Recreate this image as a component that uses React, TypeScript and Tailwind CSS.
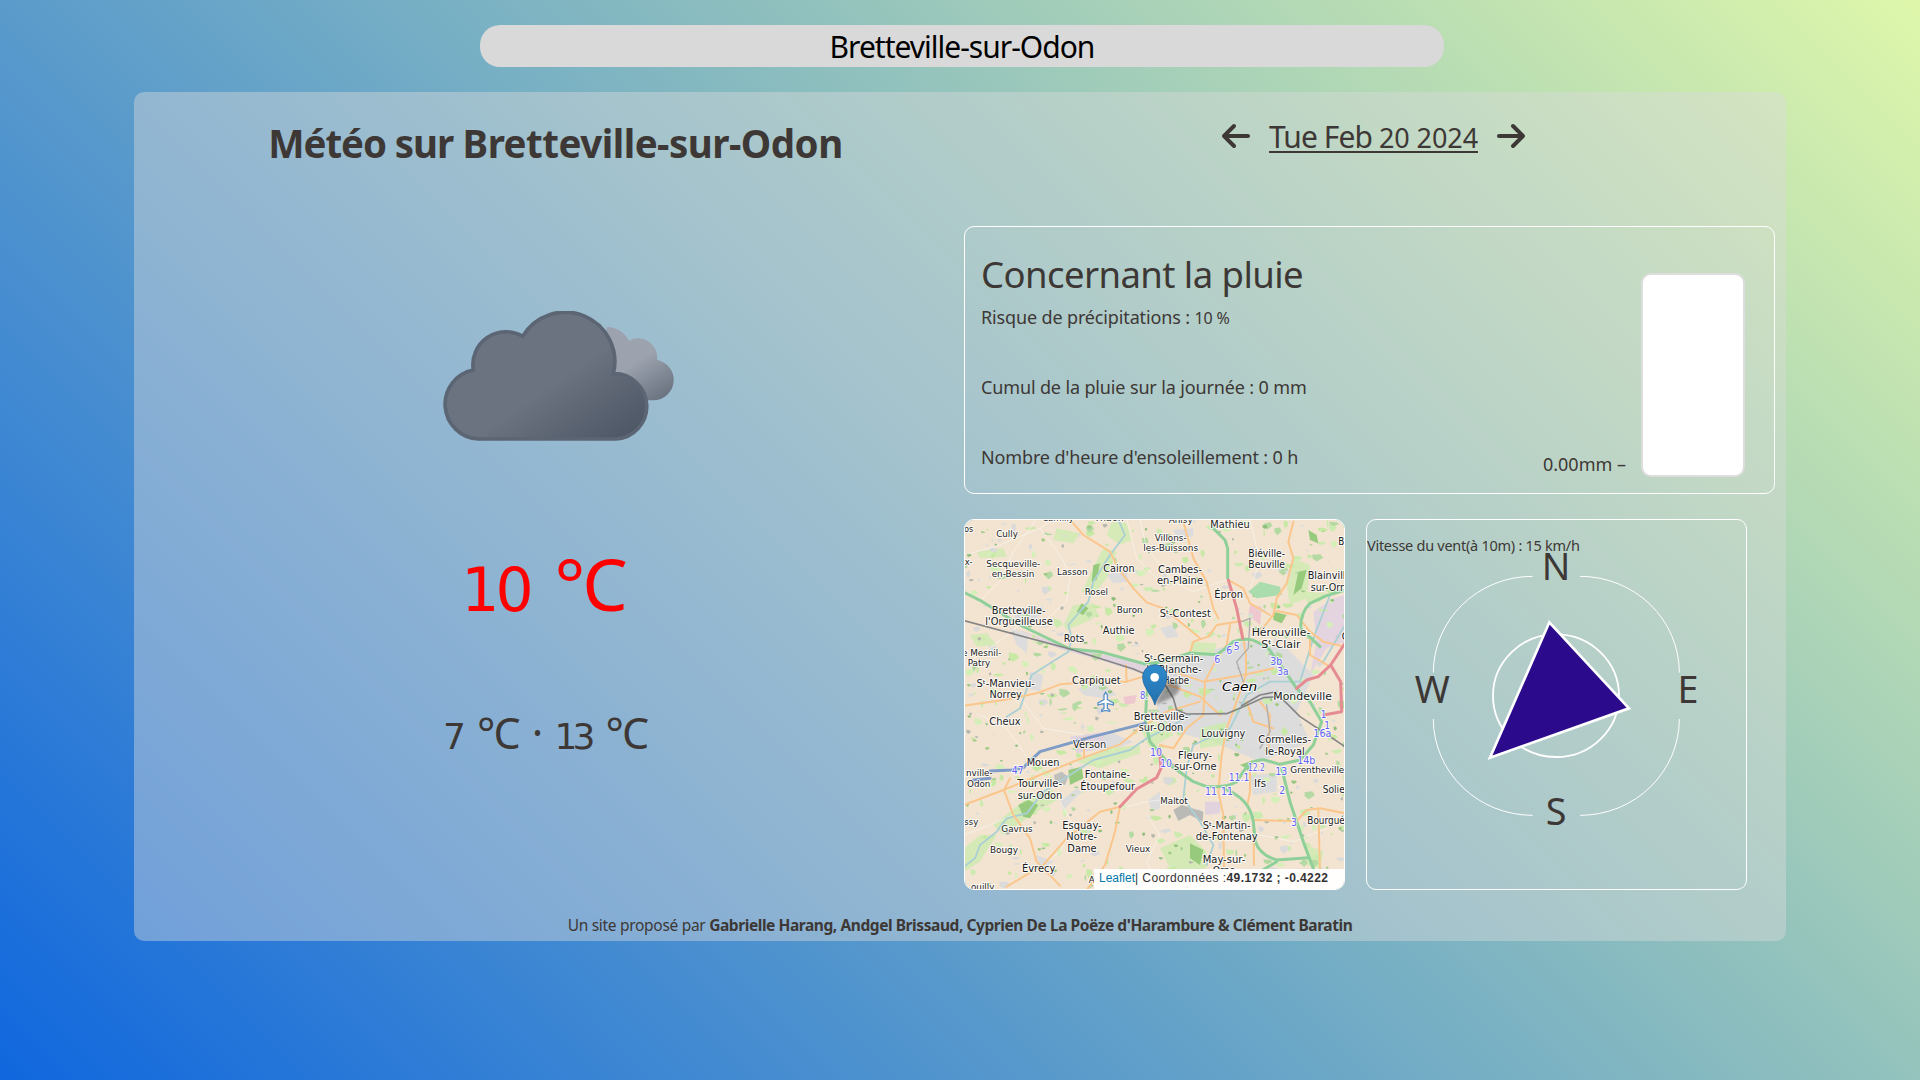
import React from "react";
import { FaArrowLeft, FaArrowRight } from "react-icons/fa6";

type Label = [text: string, x: number, y: number, width: number, size: number];

const towns: Label[] = [
  ["os", 26, 50, 28, 25],
  ["Cully", 141, 67, 65, 26],
  ["Camilly", 294, 18, 95, 26],
  ["Thaon", 447, 19, 88, 26],
  ["Secqueville-", 160, 156, 162, 26],
  ["en-Bessin", 159, 187, 128, 26],
  ["x-", 26, 150, 24, 25],
  ["Lasson", 337, 180, 92, 26],
  ["Cairon", 477, 171, 94, 29],
  ["Rosel", 409, 241, 70, 26],
  ["Buron", 509, 295, 78, 26],
  ["Authie", 476, 358, 95, 29],
  ["Bretteville-", 176, 296, 162, 29],
  ["l'Orgueilleuse", 177, 330, 203, 29],
  ["Rots", 342, 382, 62, 29],
  ["e Mesnil-", 65, 424, 118, 27],
  ["Patry", 57, 454, 68, 27],
  ["Sᵗ-Manvieu-", 137, 515, 175, 29],
  ["Norrey", 137, 549, 97, 29],
  ["Carpiquet", 409, 507, 146, 29],
  ["Anisy", 662, 24, 72, 26],
  ["Mathieu", 810, 38, 118, 29],
  ["Villons-", 632, 77, 96, 26],
  ["les-Buissons", 632, 107, 165, 26],
  ["Cambes-", 660, 173, 132, 29],
  ["en-Plaine", 660, 208, 138, 29],
  ["Épron", 806, 249, 86, 29],
  ["Sᵗ-Contest", 676, 307, 153, 29],
  ["Biéville-", 920, 126, 110, 29],
  ["Beuville", 920, 160, 110, 29],
  ["Blainville-", 1114, 193, 142, 29],
  ["sur-Orne", 1114, 228, 124, 29],
  ["B", 1144, 90, 18, 29],
  ["C", 1155, 374, 20, 29],
  ["Hérouville-", 963, 362, 176, 31],
  ["Sᵗ-Clair", 963, 398, 118, 31],
  ["Sᵗ-Germain-", 641, 441, 178, 29],
  ["la-Blanche-", 642, 475, 166, 29],
  ["Herbe", 648, 508, 78, 29],
  ["Mondeville", 1028, 555, 176, 30],
  ["Cheux", 135, 630, 94, 29],
  ["Verson", 389, 698, 100, 29],
  ["Mouen", 249, 754, 98, 29],
  ["nville-", 58, 784, 80, 27],
  ["Odon", 56, 816, 70, 27],
  ["Tourville-", 239, 817, 134, 29],
  ["sur-Odon", 240, 852, 134, 29],
  ["Fontaine-", 442, 790, 136, 29],
  ["Étoupefour", 443, 825, 165, 29],
  ["ssy", 34, 929, 42, 27],
  ["Gavrus", 171, 952, 94, 26],
  ["Bougy", 132, 1013, 84, 26],
  ["Esquay-", 366, 942, 118, 29],
  ["Notre-", 365, 976, 92, 29],
  ["Dame", 366, 1011, 88, 29],
  ["Vieux", 534, 1012, 74, 26],
  ["Évrecy", 236, 1072, 100, 29],
  ["A", 395, 1105, 18, 27],
  ["ouilly", 68, 1125, 70, 26],
  ["Bretteville-", 603, 616, 164, 29],
  ["sur-Odon", 603, 649, 134, 29],
  ["Louvigny", 790, 666, 132, 29],
  ["Cormelles-", 974, 685, 158, 29],
  ["le-Royal", 975, 721, 118, 29],
  ["Fleury-", 705, 731, 102, 29],
  ["sur-Orne", 706, 766, 128, 29],
  ["Maltot", 642, 867, 82, 26],
  ["Ifs", 900, 817, 36, 31],
  ["Grentheville", 1072, 773, 162, 26],
  ["Soliers", 1134, 835, 92, 29],
  ["Bourguébus", 1122, 926, 160, 29],
  ["Sᵗ-Martin-", 800, 942, 144, 29],
  ["de-Fontenay", 800, 975, 186, 29],
  ["May-sur-", 792, 1044, 128, 29],
  ["Orne", 792, 1078, 68, 29],
];

const exits: Label[] = [
  ["6", 772, 444, 18, 30],
  ["6", 808, 416, 18, 30],
  ["5", 830, 405, 18, 30],
  ["3b", 949, 450, 36, 30],
  ["3a", 969, 480, 34, 30],
  ["8.", 552, 551, 24, 30],
  ["47", 173, 778, 36, 30],
  ["10", 588, 723, 36, 30],
  ["10", 618, 757, 36, 30],
  ["1", 1091, 608, 17, 30],
  ["1", 1101, 642, 17, 30],
  ["16a", 1087, 667, 54, 30],
  ["14b", 1039, 746, 54, 30],
  ["13", 964, 779, 36, 30],
  ["2", 967, 837, 18, 30],
  ["12.2", 889, 768, 50, 30],
  ["11.1", 837, 798, 62, 30],
  ["11", 753, 840, 36, 30],
  ["11", 801, 840, 36, 30],
  ["3", 1002, 933, 18, 30],
];

const motorways = [
  "M12 232 L60 256 L180 330 L330 402 L420 410 L555 447 L610 440 L690 414 L770 419 Q800 400 820 380 Q850 368 880 376 L920 394 L955 440 L1010 520",
  "M760 40 L795 75 L803 100 L803 190",
  "M1155 225 L1100 242 L1050 265 Q1022 290 1022 340 L1080 395",
  "M1010 520 L1050 560 L1085 620 L1060 690 L1020 735 L960 748 L910 734 Q870 735 850 770 L830 800 Q800 818 740 815 L700 800 L630 750 L570 680 L556 620 L560 540 L590 440",
  "M790 820 Q870 850 880 920 L886 980 Q900 1020 950 1035 L1046 1028",
  "M965 760 L990 860 L1030 980 L1065 1075",
  "M950 1040 L900 1070",
];

const primaries = [
  "M335 20 L370 60 L450 110 L475 160 L520 220 L560 262 L610 280 L660 320 L720 370",
  "M12 572 L130 555 L230 535 L300 508 L400 500 L500 500 L550 485 L600 500 L720 545 L780 600",
  "M500 500 L498 450",
  "M670 20 L700 130 L740 200 L760 280 L775 310",
  "M1000 20 L985 80 L1000 130 L980 205 L950 250 L940 300 L900 350",
  "M805 195 L850 220 L870 265 L930 300",
  "M950 288 L1010 300 L1050 350 L1090 380 L1155 395",
  "M690 412 L700 380 L745 365 L770 330 L845 318",
  "M845 340 L858 420 L858 480 L830 560 L800 640 L785 720 L775 830 L790 900 L792 1060",
  "M810 330 L800 390 L770 430 L735 500 L730 600",
  "M640 470 L730 500 L850 480 L940 460",
  "M12 870 L130 825 L240 780 L370 728 L480 688 L540 640 L620 590 L720 560",
  "M150 790 L132 825 L160 900 L210 970 L230 1040 L300 1112",
  "M480 875 L420 890 L320 970 L250 1050 L190 1085 L140 1115",
  "M480 875 L465 950 L435 1050 L380 1125",
  "M372 668 L372 728",
  "M870 770 L870 830 L862 870 L880 915 L1010 918 L1040 885 L1080 880 L1155 895",
  "M1075 885 L1080 1070",
  "M880 915 L882 1050",
  "M1050 370 L1050 420 L1110 455",
  "M900 560 L930 600 L925 700",
  "M860 560 L880 620 L940 640",
  "M730 600 L680 640 L640 700 L600 690",
];

const trunks = [
  "M805 195 L830 280 L848 370",
  "M1155 385 L1112 450 L1075 485 L1040 495 L1010 520",
  "M1112 450 L1142 500 L1145 590 L1090 600",
  "M480 875 L530 822 L590 788 L603 760 L598 700",
];

const rails = [
  "M12 317 L330 402 L520 462 L610 500 L640 550 L650 585 L680 597 L800 596 L850 575 L910 548 L960 545 L1020 605 L1070 638 L1155 695",
  "M845 572 L900 540 L950 530",
];

const lanes = [
  "M12 120 L120 90 L240 40 L280 12",
  "M240 40 L300 120 L330 180 L320 260 L250 320",
  "M60 256 L120 200 L160 110 L230 12",
  "M12 450 L90 400 L180 330",
  "M540 12 L560 100 L640 200 L700 230 L810 190",
  "M500 12 L530 130 L620 220",
  "M870 12 L900 140 L870 220",
  "M60 600 L140 640 L210 740",
  "M190 560 L250 640 L370 660",
  "M300 860 L340 930 L300 1010 L250 1050",
  "M12 960 L90 930 L160 900",
  "M560 900 L600 960 L560 1040 L600 1110",
  "M900 960 L1000 980 L1100 940",
  "M480 880 L560 860 L640 850",
];

const rivers = [
  "M475 15 L495 60 L450 120 L400 200 L385 260 L325 330 L335 370 L325 410 L270 445 L215 480 L180 580 L140 605",
  "M12 1055 L45 1030 L60 990 L110 950 L140 910 L200 895 L250 830 L330 780 L400 735 L510 705 L560 670 L640 630 L690 600",
  "M1110 240 L1060 370 L1020 500 L930 500 L860 540 L810 640 L700 690 L680 760 L670 850 L720 920 L760 990 L740 1050",
  "M1155 330 L1090 440",
];

const meadows = [
  "M455 20 L500 25 L515 75 L480 90 L440 60Z",
  "M430 100 L470 110 L440 190 L400 240 L365 230 L400 160Z",
  "M340 270 L400 265 L415 300 L380 320 L320 345 L310 330Z",
  "M290 40 L360 55 L340 85 L280 75Z",
  "M50 110 L130 100 L140 125 L60 130Z",
  "M30 360 L80 355 L110 390 L50 395Z",
  "M200 850 L270 820 L300 850 L230 890 L130 960 L100 930Z",
  "M12 1000 L60 960 L110 960 L60 1040 L12 1070Z",
  "M350 740 L450 700 L540 690 L540 715 L420 760Z",
  "M600 1000 L690 960 L740 1010 L740 1060 L640 1080Z",
  "M1000 130 L1050 150 L1040 250 L990 270 L980 210Z",
  "M1035 230 L1100 235 L1080 260 L1040 265Z",
  "M690 380 L770 385 L760 420 L700 425Z",
  "M540 640 L620 620 L640 660 L570 700Z",
  "M720 640 L800 620 L790 690 L720 700Z",
  "M1040 990 L1090 1010 L1080 1060 L1040 1050Z",
];

const woods = [
  "M175 870 L205 855 L235 870 L210 910 L190 905Z",
  "M325 765 L365 755 L370 790 L330 810Z",
  "M1045 45 L1070 60 L1075 85 L1050 75Z",
  "M1015 170 L1040 165 L1025 220 L1000 240Z",
  "M365 265 L385 280 L370 300 L350 290Z",
  "M690 985 L730 1005 L720 1050 L690 1030Z",
  "M400 150 L420 145 L410 195 L395 200Z",
  "M940 290 L980 300 L965 325 L940 315Z",
  "M840 750 L880 735 L870 765Z",
];

const urban = [
  "M580 470 L700 420 L850 380 L980 400 L1060 480 L1010 590 L1050 680 L900 740 L760 680 L600 640Z",
  "M355 520 L430 505 L470 540 L430 550 L370 540Z",
  "M165 275 L240 300 L210 330 L165 310Z",
  "M150 340 L205 360 L200 415 L170 390Z",
  "M210 470 L250 480 L240 530 L205 520Z",
  "M440 180 L500 160 L505 200 L460 205Z",
  "M370 660 L450 650 L520 680 L430 715Z",
  "M230 1020 L280 1040 L240 1065Z",
  "M600 340 L640 330 L655 365 L620 370Z",
  "M640 45 L700 40 L700 65 L650 70Z",
  "M870 780 L950 775 L950 830 L880 840Z",
  "M565 855 L600 830 L600 880 L575 890Z",
  "M300 860 L350 820 L365 830 L310 885Z",
];

/* Small fields and hamlets, spread by a fixed linear congruential sequence. */
function makePatches(count: number, colors: string[], seedStart: number, size: number) {
  let seed = seedStart;
  const next = () => {
    seed = (seed * 16807) % 2147483647;
    return seed / 2147483647;
  };
  return Array.from({ length: count }, () => {
    const x = 12 + next() * 1143;
    const y = 12 + next() * 1113;
    const w = 4 + next() * size;
    const h = 4 + next() * size;
    const s = (next() - 0.5) * size;
    return {
      d: `M${x} ${y} l${w} ${s / 2} l${w / 3} ${h / 2} l${-w * 0.8} ${h / 2} l${-w / 2} ${-h * 0.4}Z`,
      fill: colors[Math.floor(next() * colors.length)],
    };
  });
}

const patches = [
  ...makePatches(380, ["#cdebb0", "#c8e9a6", "#d5efb9", "#dbdada", "#b5d9a3"], 77, 22),
  ...makePatches(300, ["#9fcb86", "#dddddc", "#c5e8a0", "#b4b8ae", "#8fbf7c"], 913, 8),
];

function Roads({ paths, color, width }: { paths: string[]; color: string; width: number }) {
  return (
    <g fill="none" stroke={color} strokeWidth={width} strokeLinejoin="round" strokeLinecap="round">
      {paths.map((d) => (
        <path key={d} d={d} />
      ))}
    </g>
  );
}

function Labels({ items, color }: { items: Label[]; color: string }) {
  return (
    <g
      fill={color}
      stroke="#ffffff"
      strokeOpacity={0.8}
      strokeWidth={6}
      strokeLinejoin="round"
      paintOrder="stroke"
      textAnchor="middle"
      fontFamily="'DejaVu Sans', sans-serif"
    >
      {items.map(([text, x, y, width, size], i) => (
        <text key={i} x={x} y={y} fontSize={size} textLength={width} lengthAdjust="spacingAndGlyphs">
          {text}
        </text>
      ))}
    </g>
  );
}

function MapCard() {
  return (
    <div className="relative h-[371px] w-[381px] overflow-hidden rounded-[10px] border border-white">
      <svg className="block h-[369px] w-[379px]" viewBox="15 15 1137 1107">
        <defs>
          <linearGradient id="pin" x1="0" y1="0" x2="0" y2="1">
            <stop offset="0" stopColor="#2e8bcc" />
            <stop offset="1" stopColor="#2470ad" />
          </linearGradient>
          <filter id="soft" x="-50%" y="-50%" width="200%" height="200%">
            <feGaussianBlur stdDeviation="5" />
          </filter>
        </defs>
        <rect x="0" y="0" width="1170" height="1140" fill="#f2e4d1" />
        <g fill="#dcdcdc">
          {urban.map((d) => (
            <path key={d} d={d} />
          ))}
        </g>
        <g fill="#cdebb0" opacity={0.8}>
          {meadows.map((d) => (
            <path key={d} d={d} />
          ))}
        </g>
        <path d="M150 335 L330 400 L560 445 L560 480 L420 435 L300 402Z" fill="#e0d3de" />
        <path d="M1060 290 L1120 250 L1155 240 L1155 380 L1100 400 L1050 480 L1070 380Z" fill="#e3d4df" />
        <path d="M735 860 L780 860 L780 895 L735 900Z M330 665 L440 650 L430 700 L350 715Z" fill="#e0d3de" />
        <path d="M490 545 L530 540 L525 565 L495 570Z M870 270 L905 275 L900 330 L865 300Z" fill="#efc8cf" />
        {patches.map((p, i) => (
          <path key={i} d={p.d} fill={p.fill} />
        ))}
        <g fill="#97ca7c">
          {woods.map((d) => (
            <path key={d} d={d} />
          ))}
        </g>
        <path d="M865 230 L900 200 L960 215 L965 240 L890 250Z" fill="#aadcae" />
        <path d="M640 885 L665 870 L730 890 L728 920 L690 900 L655 918Z" fill="#b9b9b6" />
        <path d="M282 780 L305 770 L325 785 L315 810 L285 800Z" fill="#bfbfbc" />
        <Roads paths={lanes} color="#fbf6ee" width={2} />
        <Roads paths={rivers} color="#abd0d4" width={5.500} />
        <Roads paths={primaries} color="#fbc68c" width={6} />
        <Roads paths={["M845 320 L870 310 L865 400 L830 440 L850 500 M920 570 L930 650 L900 700"]} color="#adadad" width={4} />
        <Roads paths={motorways} color="#8fd09a" width={9} />
        <Roads paths={trunks} color="#e58c92" width={9} />
        <Roads paths={["M90 768 L155 765 L190 758 L240 710 L390 667 L555 625", "M40 795 L90 790"]} color="#7f9cc6" width={9} />
        <Roads paths={rails} color="#858585" width={5} />
        <path
          d="M437 532 l5 8 v14 l18 10 v6 l-18 -4 v14 l7 5 v4 l-12 -3 l-12 3 v-4 l7 -5 v-14 l-18 4 v-6 l18 -10 v-14Z"
          fill="#ffffff"
          stroke="#5b8fc7"
          strokeWidth={4}
        />
        <Labels items={towns} color="#1c1c1c" />
        <Labels items={exits} color="#6262f5" />
        <text
          x={839}
          y={529}
          fontSize={39}
          textAnchor="middle"
          textLength={106}
          lengthAdjust="spacingAndGlyphs"
          fontStyle="italic"
          fontFamily="'DejaVu Sans', sans-serif"
          fill="#000000"
          stroke="#ffffff"
          strokeWidth={5}
          paintOrder="stroke"
        >
          Caen
        </text>
        <path d="M586 570 L612 512 Q632 490 655 505 Q668 525 640 545Z" fill="#000000" opacity={0.32} filter="url(#soft)" />
        <path
          d="M584.500 570 C578 540 548 520 548 486 A36.500 37 0 0 1 621 486 C621 520 591 540 584.500 570Z"
          fill="url(#pin)"
          stroke="#2469a3"
          strokeWidth={2.500}
        />
        <circle cx={584} cy={487} r={13} fill="#ffffff" />
      </svg>
      <div className="absolute right-0 bottom-0 flex h-5 w-[250px] items-center bg-white/95 pb-0.5 pl-[5px] font-['Liberation_Sans',Arial,sans-serif] text-xs leading-[18px] whitespace-pre text-[#333]">
        <span className="text-[#0078a8]">Leaflet</span>
        <span className="tracking-[0.42px]">| Coordonnées :</span>
        <b className="tracking-[0.42px]">49.1732 ; -0.4222</b>
      </div>
    </div>
  );
}

function WindCard() {
  return (
    <div className="relative h-[371px] w-[381px] rounded-[10px] border border-white">
      <svg className="block h-[369px] w-[379px]" viewBox="21 30 1137 1107">
        <g fill="none" stroke="#ffffff" strokeWidth={3}>
          <path d="M220 488 A298 289 0 0 1 518 199" />
          <path d="M660 199 A298 289 0 0 1 958 488" />
          <path d="M220 627 A298 289 0 0 0 518 916" />
          <path d="M660 916 A298 289 0 0 0 958 627" />
          <ellipse cx={588} cy={557} rx={189} ry={184} strokeWidth={5.500} />
        </g>
        <path d="M568 337 L807 595 L390 743Z" fill="#2c0a8c" stroke="#ffffff" strokeWidth={8} />
        <g fill="#3d3835" fontFamily="'Noto Sans', sans-serif" fontSize={113} textAnchor="middle">
          <text x={588} y={209}>N</text>
          <text x={217} y={579}>W</text>
          <text x={984} y={579}>E</text>
          <text x={588} y={946}>S</text>
        </g>
      </svg>
      <p className="absolute top-[13px] left-0 text-[14.5px] leading-6 tracking-[-0.27px] whitespace-nowrap">
        Vitesse du vent(à 10m) : 15 km/h
      </p>
    </div>
  );
}

function CloudIcon() {
  return (
    <svg className="mt-[138px] ml-[309px] block h-[130px] w-[231px]" viewBox="69 93 693 390">
      <defs>
        <linearGradient id="back" gradientUnits="userSpaceOnUse" x1="590" y1="150" x2="720" y2="361">
          <stop offset="0" stopColor="#9ca3af" />
          <stop offset="0.45" stopColor="#9ca3af" />
          <stop offset="1" stopColor="#6b7280" />
        </linearGradient>
        <linearGradient id="front" gradientUnits="userSpaceOnUse" x1="270" y1="120" x2="560" y2="540">
          <stop offset="0" stopColor="#6b7280" />
          <stop offset="0.45" stopColor="#6b7280" />
          <stop offset="1" stopColor="#4b5563" />
        </linearGradient>
      </defs>
      <path
        d="M560 361 L560 141 A74 74 0 0 1 627 182 A57 57 0 0 1 711 240 A61 61 0 0 1 700 361Z"
        fill="url(#back)"
      />
      <path
        d="M175 477 A104.500 104.500 0 0 1 160 270 A99 99 0 0 1 308 169 A148.700 148.700 0 0 1 580 281 A98.100 98.100 0 0 1 588 477Z"
        fill="url(#front)"
        stroke="#5b6573"
        strokeWidth={11}
      />
    </svg>
  );
}

function RainCard() {
  return (
    <div className="mt-[70px] flex h-[268px] w-[811px] justify-between rounded-[10px] border border-white pr-[29px] pl-4">
      <div>
        <h2 className="mt-[23px] text-[36.5px] leading-[48px] tracking-[-0.57px]">Concernant la pluie</h2>
        <div className="mt-[7px] text-[18px] leading-6 tracking-[-0.14px]">
          <p>
            Risque de précipitations : <span className="text-base">10 %</span>
          </p>
          <p className="mt-[45px]">Cumul de la pluie sur la journée : 0 mm</p>
          <p className="mt-[46px]">Nombre d'heure d'ensoleillement : 0 h</p>
        </div>
      </div>
      <div className="mt-[46px] flex h-[204px] gap-[15px]">
        <p className="mb-px self-end text-[18px] leading-6">0.00mm –</p>
        <div className="h-[204px] w-[104px] rounded-[10px] border-2 border-[#dddddd] bg-white" />
      </div>
    </div>
  );
}

export default function App() {
  return (
    <div className="flex h-[1080px] w-[1920px] flex-col items-center overflow-hidden bg-[linear-gradient(45deg,#1067de,#def7aa)] font-['Noto_Sans',sans-serif] text-[#3d3835]">
      <div className="mt-[25px] ml-1 flex h-[42px] w-[964px] items-center justify-center rounded-[20px] bg-[#d9d9d9] pt-px text-[30px] leading-none tracking-[-1px] text-black">
        Bretteville-sur-Odon
      </div>
      <main className="mt-[25px] h-[849px] w-[1652px] rounded-[10px] bg-[#d9d9d9]/43">
        <div className="flex h-[798px]">
          <section className="w-[830px]">
            <h1 className="mt-[21px] w-[843px] text-center text-[38.5px] leading-[60px] font-bold tracking-[-0.5px]">
              <span className="tracking-[-1.1px]">Météo sur</span> Bretteville-sur-Odon
            </h1>
            <CloudIcon />
            <p className="mt-[102px] w-[818px] text-center text-[72px] leading-[80px] text-[#ff0000]">
              <span className="mr-1.5 font-['DejaVu_Sans',sans-serif] text-[60px] tracking-[-4px]">10</span>{" "}
              <span className="tracking-[-3px]">°C</span>
            </p>
            <p className="mt-[73px] w-[822px] text-center text-[43px] leading-[60px]">
              <span className="font-['DejaVu_Sans',sans-serif] text-[36px]">7</span>{" "}
              <span className="mr-0.5 tracking-[-2px]">°C</span> ·{" "}
              <span className="mr-1 font-['DejaVu_Sans',sans-serif] text-[36px] tracking-[-5px]">13</span>{" "}
              <span className="tracking-[-2px]">°C</span>
            </p>
          </section>
          <section>
            <div className="mt-6 ml-[256px] flex h-10 w-[307px] items-center justify-between">
              <FaArrowLeft className="size-8" />
              <span className="mt-0.5 text-[30px] leading-10 tracking-[-0.9px] whitespace-nowrap underline decoration-2 underline-offset-[3px]">
                Tue Feb <span className="text-[27px] tracking-[-0.1px]">20 2024</span>
              </span>
              <FaArrowRight className="size-8" />
            </div>
            <RainCard />
            <div className="mt-[25px] flex gap-[21px]">
              <MapCard />
              <WindCard />
            </div>
          </section>
        </div>
        <footer className="mt-[23px] text-center text-[15.5px] leading-6 tracking-[-0.3px]">
          Un site proposé par{" "}
          <b className="tracking-[-0.43px]">
            Gabrielle Harang, Andgel Brissaud, Cyprien De La Poëze d'Harambure &amp; Clément Baratin
          </b>
        </footer>
      </main>
    </div>
  );
}
